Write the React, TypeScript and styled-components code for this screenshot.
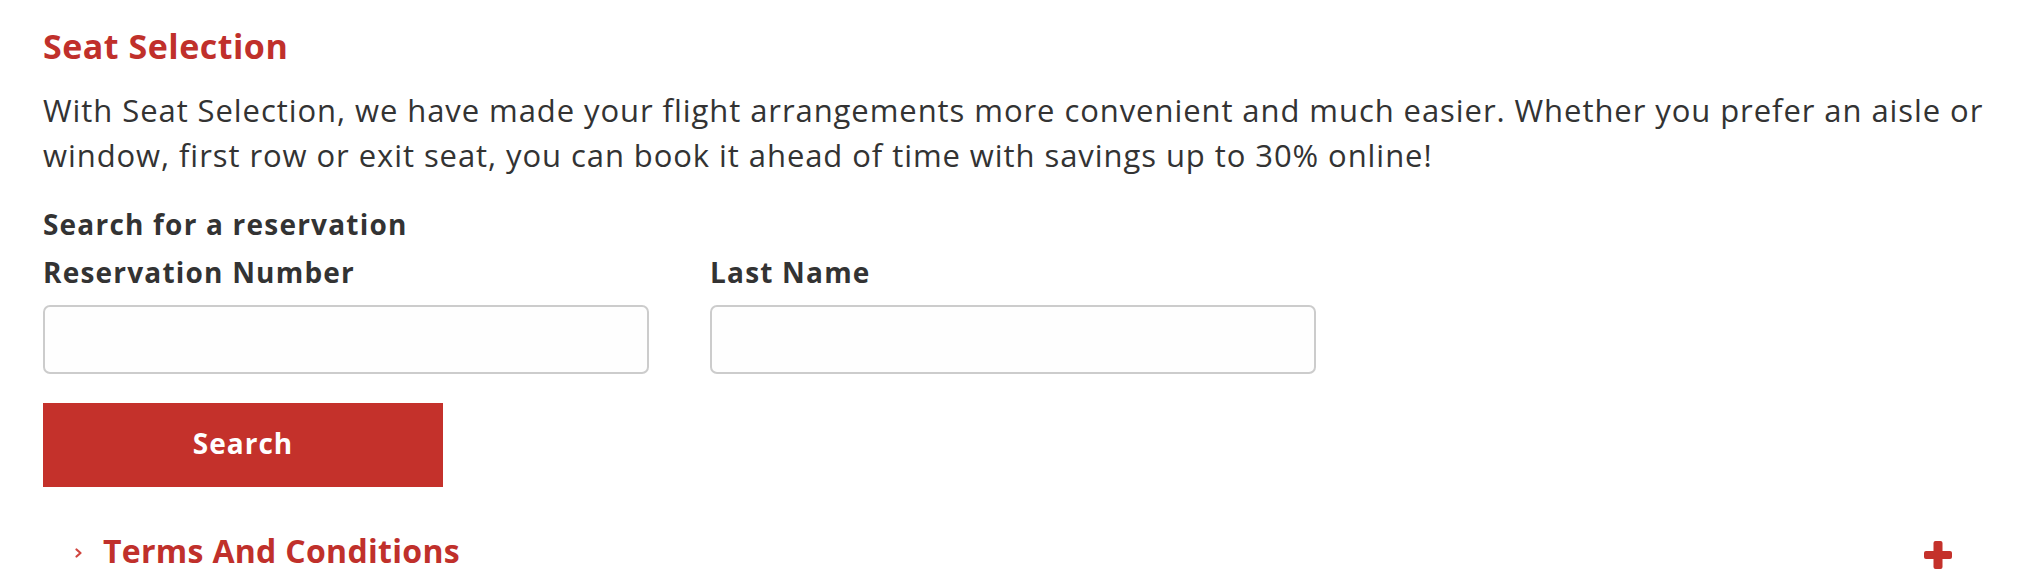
import React from 'react';
import styled, {createGlobalStyle} from 'styled-components';

const GlobalStyle = createGlobalStyle`
  html, body {
    margin: 0;
    padding: 0;
    background: #ffffff;
  }
  body {
    font-family: "Open Sans", "Noto Sans", sans-serif;
    color: #333333;
  }
`;

const Page = styled.div`
  padding: 24px 0 0 43px;
  width: 1960px;
`;

const Title = styled.h2`
  margin: 0;
  font-size: 34px;
  line-height: 44px;
  font-weight: 700;
  letter-spacing: 0.5px;
  color: #c0302b;
`;

const Intro = styled.p`
  margin: 20px 0 0;
  font-size: 31px;
  line-height: 45px;
  color: #333333;
  letter-spacing: 0.93px;
`;

const SubTitle = styled.h3`
  margin: 29px 0 0;
  font-size: 28px;
  line-height: 34px;
  font-weight: 700;
  letter-spacing: 1.2px;
  color: #333333;
`;

const FieldRow = styled.div`
  display: flex;
  gap: 61px;
  margin-top: 14px;
`;

const Field = styled.label`
  display: flex;
  flex-direction: column;
  gap: 16px;
`;

const FieldLabel = styled.span`
  font-size: 28px;
  line-height: 34px;
  font-weight: 700;
  letter-spacing: 1.2px;
`;

const TextInput = styled.input`
  box-sizing: border-box;
  width: 606px;
  height: 69px;
  border: 2px solid #cccccc;
  border-radius: 7px;
  background: #fefefe;
  font: inherit;
  font-size: 24px;
  padding: 0 16px;
  outline: none;
`;

const SearchButton = styled.button`
  display: block;
  margin-top: 29px;
  width: 400px;
  height: 84px;
  padding: 0 0 5px;
  border: 0;
  background: #c4312b;
  color: #ffffff;
  font-family: inherit;
  font-size: 28px;
  font-weight: 700;
  letter-spacing: 1px;
  cursor: pointer;
`;

const Accordion = styled.div`
  display: flex;
  align-items: center;
  justify-content: space-between;
  margin-top: 42px;
  padding: 0 51px 0 32px;
`;

const AccordionTitle = styled.div`
  display: flex;
  align-items: center;
  gap: 20px;
  font-size: 32px;
  line-height: 44px;
  font-weight: 700;
  letter-spacing: 0.3px;
  color: #c0302b;
`;

const Chevron = styled.span`
  display: flex;
  margin-top: 4px;
`;

const PlusButton = styled.span`
  display: flex;
  margin-top: 8px;
`;

const ChevronIcon = () => (
  <svg width="8" height="10" viewBox="0 0 8 10">
    <polyline points="1.5,1.5 5.5,5 1.5,8.5" fill="none" stroke="#d0453f" strokeWidth="2.2"
              strokeLinecap="round" strokeLinejoin="round"/>
  </svg>
);

const PlusIcon = () => (
  <svg width="28" height="28" viewBox="0 0 28 28">
    <rect x="9.5" y="0" width="9" height="28" rx="2" fill="#c4312b"/>
    <rect x="0" y="10" width="28" height="8" rx="2" fill="#c4312b"/>
  </svg>
);

export default function App() {
  return (
    <Page>
      <GlobalStyle/>
      <Title>Seat Selection</Title>
      <Intro>
        With Seat Selection, we have made your flight arrangements more convenient and much easier. Whether you
        prefer an aisle or window, first row or exit seat, you can book it ahead of time with savings up to 30% online!
      </Intro>
      <SubTitle>Search for a reservation</SubTitle>
      <FieldRow>
        <Field>
          <FieldLabel>Reservation Number</FieldLabel>
          <TextInput type="text"/>
        </Field>
        <Field>
          <FieldLabel>Last Name</FieldLabel>
          <TextInput type="text"/>
        </Field>
      </FieldRow>
      <SearchButton>Search</SearchButton>
      <Accordion>
        <AccordionTitle>
          <Chevron>
            <ChevronIcon/>
          </Chevron>
          Terms And Conditions
        </AccordionTitle>
        <PlusButton>
          <PlusIcon/>
        </PlusButton>
      </Accordion>
    </Page>
  );
}
